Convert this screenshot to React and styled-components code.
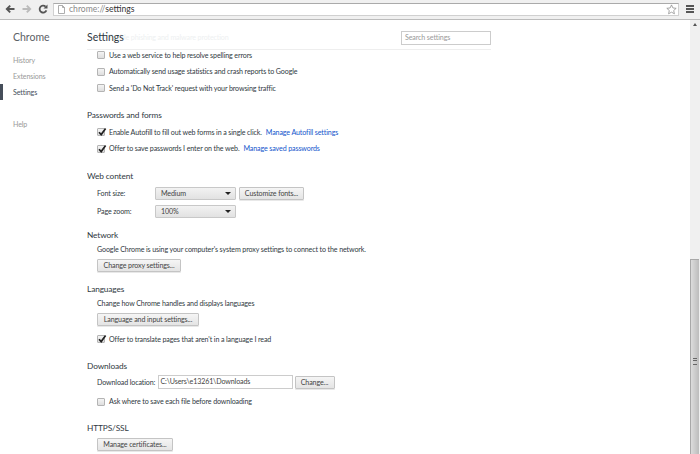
import styled, { createGlobalStyle } from "styled-components";

const GlobalStyle = createGlobalStyle`
  html, body {
    margin: 0;
    padding: 0;
    background: #fff;
    overflow: hidden;
  }
  * {
    box-sizing: border-box;
  }
`;

const Page = styled.div`
  width: 700px;
  height: 454px;
  display: flex;
  flex-direction: column;
  overflow: hidden;
  font-family: Lato, "Liberation Sans", sans-serif;
  font-size: 7.1px;
  letter-spacing: -0.12px;
  color: #303942;
`;

const Toolbar = styled.div`
  height: 20px;
  flex: none;
  display: flex;
  align-items: center;
  padding: 1px 5px 2px 5px;
  background: #f0f0f0;
  border-bottom: 1px solid #bcbcbc;
  letter-spacing: 0;
`;

const NavIcon = styled.svg`
  width: 10px;
  height: 10px;
  margin-right: 6.5px;
  flex: none;
`;

const Omnibox = styled.div`
  width: 626px;
  height: 13px;
  margin-left: -1.5px;
  display: flex;
  align-items: center;
  padding: 0 1px 0 4px;
  background: #fff;
  border: 1px solid #d0d0d0;
  border-top-color: #aaa;
  font-size: 8.6px;
`;

const Scheme = styled.span`
  color: #8a8a8a;
  margin-left: 4px;
`;

const Path = styled.span`
  color: #333;
`;

const Star = styled.svg`
  width: 11px;
  height: 11px;
  margin-left: auto;
`;

const MenuButton = styled.div`
  width: 8px;
  height: 8px;
  margin-left: 7px;
  flex: none;
  border-top: 2px solid #555;
  border-bottom: 2px solid #555;
  position: relative;
  &::after {
    content: "";
    position: absolute;
    left: 0;
    right: 0;
    top: 1px;
    height: 2px;
    background: #555;
  }
`;

const Body = styled.div`
  flex: 1;
  display: flex;
  min-height: 0;
`;

const Sidebar = styled.nav`
  width: 87px;
  flex: none;
  padding-top: 10px;
`;

const Brand = styled.div`
  font-size: 10.5px;
  line-height: 14px;
  letter-spacing: 0;
  color: #5c6166;
  padding-left: 13px;
  margin-bottom: 8px;
`;

const NavItem = styled.div`
  height: 16px;
  line-height: 18px;
  padding-left: ${(p) => (p.$active ? "10px" : "13px")};
  color: ${(p) => (p.$active ? "#464e5a" : "#999")};
  border-left: ${(p) => (p.$active ? "3px solid #464e5a" : "none")};
  margin-bottom: ${(p) => (p.$gap ? "16px" : "0")};
`;

const Main = styled.main`
  flex: 1;
  padding-top: 10px;
  min-width: 0;
  overflow: hidden;
`;

const Header = styled.header`
  width: 404px;
  height: 20px;
  position: relative;
  display: flex;
  justify-content: space-between;
  align-items: flex-start;
  border-bottom: 1px solid #eee;
`;

const Title = styled.h1`
  margin: 0;
  font-size: 10.5px;
  line-height: 14px;
  letter-spacing: 0;
  font-weight: 400;
  color: #303942;
  position: relative;
`;

const FadedRow = styled.div`
  position: absolute;
  left: 22px;
  top: 3px;
  color: #eef0f1;
  line-height: 10px;
`;

const Search = styled.div`
  width: 90px;
  height: 14px;
  margin-top: 1px;
  padding-left: 3px;
  line-height: 12px;
  color: #999;
  border: 1px solid #ccc;
  position: relative;
`;

const Section = styled.section`
  margin-top: ${(p) => p.$before || 0}px;
  margin-bottom: ${(p) => p.$after || 0}px;
`;

const SectionTitle = styled.h3`
  margin: 0 0 ${(p) => p.$gap ?? 3}px;
  font-size: 8.3px;
  line-height: 12px;
  font-weight: 400;
  color: #303942;
`;

const Indent = styled.div`
  padding-left: 10px;
  display: flex;
  flex-direction: column;
`;

const CheckRow = styled.div`
  height: ${(p) => p.$h || 16.5}px;
  display: flex;
  align-items: center;
  gap: 4px;
`;

const Box = styled.span`
  width: 8px;
  height: 8px;
  flex: none;
  border: 1px solid #b4b4b4;
  border-radius: 1px;
  background: linear-gradient(#f4f4f4, #dedede);
  position: relative;
  svg {
    position: absolute;
    left: -1px;
    top: -2px;
    width: 10px;
    height: 10px;
  }
`;

const Link = styled.a`
  color: #15c;
  margin-left: 4px;
`;

const FieldRow = styled.div`
  display: flex;
  align-items: center;
  gap: ${(p) => p.$gap ?? 3}px;
  height: ${(p) => p.$h || 18.5}px;
`;

const Label = styled.span`
  width: ${(p) => p.$w || 55}px;
  flex: none;
`;

const Dropdown = styled.div`
  width: 81px;
  height: 13px;
  padding: 0 7px 0 5px;
  display: flex;
  align-items: center;
  justify-content: space-between;
  border: 1px solid #c8c8c8;
  border-radius: 1px;
  background: linear-gradient(#f2f2f2, #e2e2e2);
  color: #444;
  &::after {
    content: "";
    margin-right: -3px;
    border: 3px solid transparent;
    border-top: 3px solid #222;
    border-bottom: 0;
  }
`;

const Button = styled.button`
  display: block;
  height: 13px;
  padding: 0;
  margin: 0;
  width: ${(p) => p.$w}px;
  font: inherit;
  letter-spacing: inherit;
  color: #444;
  white-space: nowrap;
  border: 1px solid #c4c4c4;
  border-radius: 1px;
  background: linear-gradient(#f5f5f5, #e4e4e4);
  box-shadow: 0 1px 0 #e8e8e8;
`;

const Para = styled.div`
  line-height: 12px;
  margin-bottom: 3px;
`;

const PathInput = styled.div`
  width: 135px;
  height: 14px;
  line-height: 12px;
  padding-left: 2px;
  border: 1px solid #ccc;
  color: #444;
`;

const ButtonSlot = styled.div`
  margin-bottom: ${(p) => p.$after || 0}px;
`;

const Scrollbar = styled.div`
  width: 10px;
  flex: none;
  background: #f0f0f0;
  display: flex;
  flex-direction: column;
`;

const ArrowUp = styled.div`
  height: 16px;
  flex: none;
  display: flex;
  justify-content: center;
  padding-top: 3px;
  &::before {
    content: "";
    height: 0;
    border: 2px solid transparent;
    border-bottom: 3px solid #555;
    border-top: 0;
  }
`;

const Track = styled.div`
  flex: 1;
  padding-top: 223px;
  display: flex;
`;

const Thumb = styled.div`
  flex: 1;
  display: flex;
  align-items: flex-start;
  justify-content: center;
  padding-top: 98px;
  margin-right: 1px;
  border: 1px solid #a8a8a8;
  border-width: 1px 0 0 1px;
  background: linear-gradient(90deg, #dcdcdc, #bcbcbc);
  &::before {
    content: "";
    width: 4px;
    height: 5px;
    border-top: 1px solid #666;
    border-bottom: 1px solid #666;
    background: linear-gradient(#0000 1px, #666 1px, #666 2px, #0000 2px);
  }
`;

const Check = ({ checked, children, h }) => (
  <CheckRow $h={h}>
    <Box>
      {checked && (
        <svg viewBox="0 0 10 10">
          <path d="M2 5.2 L4.2 7.6 L8.6 1.4" fill="none" stroke="#222" strokeWidth="1.7" />
        </svg>
      )}
    </Box>
    <span>{children}</span>
  </CheckRow>
);

const App = () => (
  <Page>
    <GlobalStyle />
    <Toolbar>
      <NavIcon viewBox="0 0 10 10">
        <path d="M9.5 5H2.5M5.2 1.6 1.8 5l3.4 3.4" fill="none" stroke="#555" strokeWidth="1.9" />
      </NavIcon>
      <NavIcon viewBox="0 0 10 10">
        <path d="M.5 5h7M4.8 1.6 8.2 5 4.8 8.4" fill="none" stroke="#bbb" strokeWidth="1.9" />
      </NavIcon>
      <NavIcon viewBox="0 0 10 10">
        <path d="M8.4 6.4A3.5 3.5 0 1 1 7.6 2.6" fill="none" stroke="#555" strokeWidth="1.8" />
        <path d="M9.5.6v4H5.5z" fill="#555" />
      </NavIcon>
      <Omnibox>
        <svg width="7" height="9" viewBox="0 0 7 9">
          <path d="M.5.5h4l2 2v6h-6zM4.5.5v2h2" fill="#fff" stroke="#999" strokeWidth=".8" />
        </svg>
        <Scheme>chrome://</Scheme>
        <Path>settings</Path>
        <Star viewBox="0 0 12 12">
          <path
            d="M6 1l1.5 3.3 3.6.4-2.7 2.4.8 3.6L6 8.9l-3.2 1.8.8-3.6L.9 4.7l3.6-.4z"
            fill="#fff"
            stroke="#888"
            strokeWidth=".8"
          />
        </Star>
      </Omnibox>
      <MenuButton />
    </Toolbar>
    <Body>
      <Sidebar>
        <Brand>Chrome</Brand>
        <NavItem>History</NavItem>
        <NavItem>Extensions</NavItem>
        <NavItem $active $gap>
          Settings
        </NavItem>
        <NavItem>Help</NavItem>
      </Sidebar>
      <Main>
        <Header>
          <FadedRow>Enable phishing and malware protection</FadedRow>
          <Title>Settings</Title>
          <Search>Search settings</Search>
        </Header>
        <Section $before={-3} $after={12.5}>
          <Indent>
            <Check>Use a web service to help resolve spelling errors</Check>
            <Check>Automatically send usage statistics and crash reports to Google</Check>
            <Check>Send a 'Do Not Track' request with your browsing traffic</Check>
          </Indent>
        </Section>
        <Section $after={13}>
          <SectionTitle>Passwords and forms</SectionTitle>
          <Indent>
            <Check checked>
              Enable Autofill to fill out web forms in a single click.
              <Link>Manage Autofill settings</Link>
            </Check>
            <Check checked>
              Offer to save passwords I enter on the web.
              <Link>Manage saved passwords</Link>
            </Check>
          </Indent>
        </Section>
        <Section $after={8}>
          <SectionTitle $gap={2}>Web content</SectionTitle>
          <Indent>
            <FieldRow>
              <Label>Font size:</Label>
              <Dropdown>Medium</Dropdown>
              <Button $w={65}>Customize fonts...</Button>
            </FieldRow>
            <FieldRow>
              <Label>Page zoom:</Label>
              <Dropdown>100%</Dropdown>
            </FieldRow>
          </Indent>
        </Section>
        <Section $after={11}>
          <SectionTitle>Network</SectionTitle>
          <Indent>
            <Para>Google Chrome is using your computer's system proxy settings to connect to the network.</Para>
            <ButtonSlot>
              <Button $w={84}>Change proxy settings...</Button>
            </ButtonSlot>
          </Indent>
        </Section>
        <Section $after={12}>
          <SectionTitle>Languages</SectionTitle>
          <Indent>
            <Para>Change how Chrome handles and displays languages</Para>
            <ButtonSlot $after={5}>
              <Button $w={102}>Language and input settings...</Button>
            </ButtonSlot>
            <Check checked>Offer to translate pages that aren't in a language I read</Check>
          </Indent>
        </Section>
        <Section $after={9.5}>
          <SectionTitle $gap={2}>Downloads</SectionTitle>
          <Indent>
            <FieldRow $h={17} $gap={2}>
              <Label $w={58.5}>Download location:</Label>
              <PathInput>C:\Users\e13261\Downloads</PathInput>
              <Button $w={40}>Change...</Button>
            </FieldRow>
            <CheckRow $h={22}>
              <Box />
              <span>Ask where to save each file before downloading</span>
            </CheckRow>
          </Indent>
        </Section>
        <Section>
          <SectionTitle $gap={4}>HTTPS/SSL</SectionTitle>
          <Indent>
            <ButtonSlot>
              <Button $w={76}>Manage certificates...</Button>
            </ButtonSlot>
          </Indent>
        </Section>
      </Main>
      <Scrollbar>
        <ArrowUp />
        <Track>
          <Thumb />
        </Track>
      </Scrollbar>
    </Body>
  </Page>
);

export default App;
